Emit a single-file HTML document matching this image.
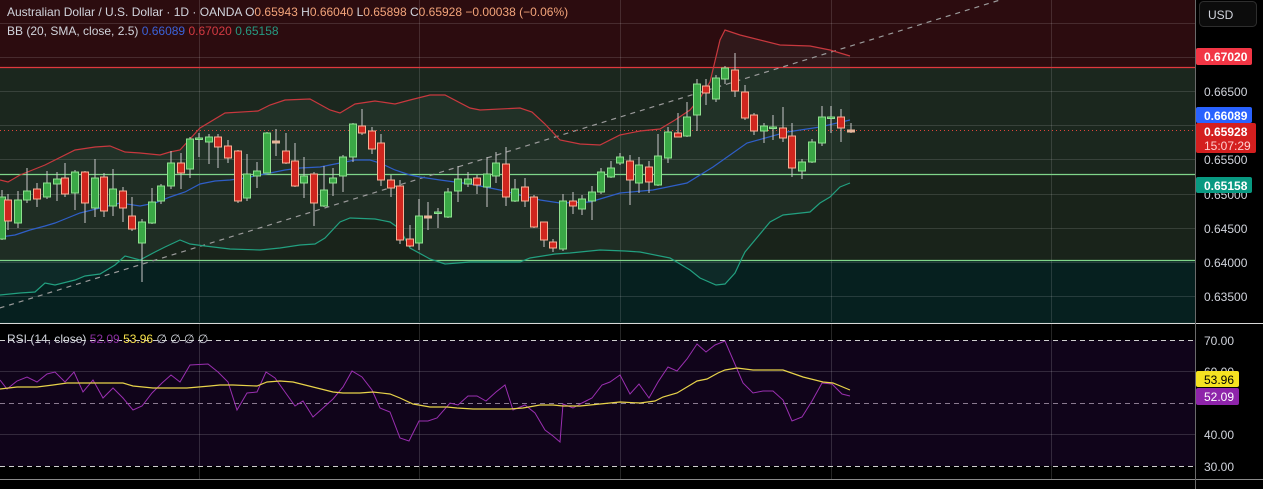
<!DOCTYPE html>
<html><head><meta charset="utf-8"><style>
html,body{margin:0;padding:0;background:#000;width:1263px;height:489px;overflow:hidden;font-family:"Liberation Sans",sans-serif}
svg{display:block}
text{font-family:"Liberation Sans",sans-serif;font-size:12px}
.g rect{fill:#3aa846;stroke:#8fe08f;stroke-width:1}
.r rect{fill:#d0261e;stroke:#f7b096;stroke-width:1}
.w line{stroke:#c8c8c8;stroke-width:1}
</style></head><body>
<svg width="1263" height="489" viewBox="0 0 1263 489" xmlns="http://www.w3.org/2000/svg">
<rect x="0" y="0" width="1195" height="67" fill="#2c0c0f"/>
<rect x="0" y="67" width="1195" height="107" fill="#1b271e"/>
<rect x="0" y="174" width="1195" height="86" fill="#19231a"/>
<rect x="0" y="260" width="1195" height="63" fill="#06201f"/>
<polygon fill="#5a8a80" fill-opacity="0.10" points="0,180 8,182 20,175 45,165 75,150 95,147 110,146 125,152 140,153 160,155 170,152 180,150 200,128 225,113 258,111 270,105 285,100 310,99 330,110 340,113 355,104 375,101 395,104 410,100 430,95 445,95 470,108 480,110 520,108 532,112 545,124 560,140 580,144 600,145 620,135 640,131 660,129 675,120 690,110 700,98 710,82 720,40 725,30 740,35 780,45 810,46 830,50 850,56 850,183 840,187 830,197 820,203 810,212 783,215 770,222 745,252 742,258 735,273 725,284 716,285 700,278 690,270 670,258 640,252 625,251 600,250 570,253 555,254 530,258 520,262 470,262 445,264 430,259 410,248 400,229 390,222 375,219 350,218 340,222 325,238 315,244 300,245 280,248 260,250 230,249 205,246 190,244 180,240 165,247 155,252 140,260 125,256 115,265 100,274 85,276 75,280 55,285 45,283 35,292 20,293 0,295"/>
<g stroke="#ffffff" stroke-opacity="0.13" stroke-width="1">
<line x1="0" y1="23.5" x2="1195" y2="23.5"/><line x1="0" y1="57.5" x2="1195" y2="57.5"/>
<line x1="0" y1="91.5" x2="1195" y2="91.5"/><line x1="0" y1="125.5" x2="1195" y2="125.5"/>
<line x1="0" y1="159.5" x2="1195" y2="159.5"/><line x1="0" y1="194.5" x2="1195" y2="194.5"/>
<line x1="0" y1="228.5" x2="1195" y2="228.5"/><line x1="0" y1="262.5" x2="1195" y2="262.5"/>
<line x1="0" y1="296.5" x2="1195" y2="296.5"/>
<line x1="199.5" y1="0" x2="199.5" y2="479"/><line x1="419.5" y1="0" x2="419.5" y2="479"/>
<line x1="620.5" y1="0" x2="620.5" y2="479"/><line x1="831.5" y1="0" x2="831.5" y2="479"/>
<line x1="1051.5" y1="0" x2="1051.5" y2="479"/>
</g>
<line x1="0" y1="67.5" x2="1195" y2="67.5" stroke="#e0393e" stroke-width="1.3"/>
<line x1="0" y1="174.5" x2="1195" y2="174.5" stroke="#7fd58a" stroke-width="1.3"/>
<line x1="0" y1="260.5" x2="1195" y2="260.5" stroke="#7fd58a" stroke-width="1.3"/>
<line x1="-10" y1="311" x2="1000" y2="0" stroke="#9a9a9a" stroke-width="1.2" stroke-dasharray="5,5"/>
<line x1="0" y1="130.5" x2="1195" y2="130.5" stroke="#e0453a" stroke-width="1" stroke-dasharray="1,3"/>
<polyline fill="none" stroke="#c8383e" stroke-width="1.2" points="0,180 8,182 20,175 45,165 75,150 95,147 110,146 125,152 140,153 160,155 170,152 180,150 200,128 225,113 258,111 270,105 285,100 310,99 330,110 340,113 355,104 375,101 395,104 410,100 430,95 445,95 470,108 480,110 520,108 532,112 545,124 560,140 580,144 600,145 620,135 640,131 660,129 675,120 690,110 700,98 710,82 720,40 725,30 740,35 780,45 810,46 830,50 850,56"/>
<polyline fill="none" stroke="#2f5fc8" stroke-width="1.2" points="0,237 15,235 30,230 45,226 55,223 65,219 80,213 100,208 120,203 140,206 155,203 170,197 185,192 200,184 215,181 230,180 245,178 265,174 285,170 300,168 320,167 340,163 355,160 370,160 380,163 395,170 410,175 420,177 440,180 470,184 500,190 540,200 560,203 590,202 620,193 653,190 687,183 713,167 747,143 787,132 820,127 850,120"/>
<polyline fill="none" stroke="#22a080" stroke-width="1.2" points="0,295 20,293 35,292 45,283 55,285 75,280 85,276 100,274 115,265 125,256 140,260 155,252 165,247 180,240 190,244 205,246 230,249 260,250 280,248 300,245 315,244 325,238 340,222 350,218 375,219 390,222 400,229 410,248 430,259 445,264 470,262 520,262 530,258 555,254 570,253 600,250 625,251 640,252 670,258 690,270 700,278 716,285 725,284 735,273 742,258 745,252 770,222 783,215 810,212 820,203 830,197 840,187 850,183"/>
<g class="w">
<line x1="2" y1="190" x2="2" y2="240"/><line x1="8" y1="194" x2="8" y2="230"/><line x1="18" y1="191" x2="18" y2="228"/><line x1="27" y1="168" x2="27" y2="203"/><line x1="37" y1="183" x2="37" y2="207"/><line x1="47" y1="171" x2="47" y2="199"/><line x1="57" y1="172" x2="57" y2="201"/><line x1="65" y1="163" x2="65" y2="197"/><line x1="75" y1="170" x2="75" y2="210"/><line x1="85" y1="171" x2="85" y2="223"/><line x1="95" y1="159" x2="95" y2="217"/><line x1="104" y1="173" x2="104" y2="217"/><line x1="113" y1="169" x2="113" y2="216"/><line x1="123" y1="187" x2="123" y2="222"/><line x1="132" y1="197" x2="132" y2="231"/><line x1="142" y1="219" x2="142" y2="282"/><line x1="152" y1="188" x2="152" y2="224"/><line x1="161" y1="184" x2="161" y2="204"/><line x1="171" y1="151" x2="171" y2="189"/><line x1="181" y1="153" x2="181" y2="189"/><line x1="190" y1="137" x2="190" y2="178"/><line x1="199" y1="133" x2="199" y2="157"/><line x1="209" y1="134" x2="209" y2="164"/><line x1="218" y1="134" x2="218" y2="168"/><line x1="228" y1="140" x2="228" y2="163"/><line x1="238" y1="150" x2="238" y2="203"/><line x1="247" y1="154" x2="247" y2="201"/><line x1="257" y1="162" x2="257" y2="188"/><line x1="267" y1="132" x2="267" y2="173"/><line x1="276" y1="129" x2="276" y2="156"/><line x1="286" y1="133" x2="286" y2="164"/><line x1="295" y1="143" x2="295" y2="187"/><line x1="304" y1="157" x2="304" y2="198"/><line x1="314" y1="172" x2="314" y2="226"/><line x1="324" y1="166" x2="324" y2="207"/><line x1="333" y1="168" x2="333" y2="196"/><line x1="343" y1="155" x2="343" y2="192"/><line x1="353" y1="123" x2="353" y2="162"/><line x1="362" y1="109" x2="362" y2="135"/><line x1="372" y1="127" x2="372" y2="154"/><line x1="381" y1="134" x2="381" y2="186"/><line x1="391" y1="175" x2="391" y2="197"/><line x1="400" y1="180" x2="400" y2="244"/><line x1="410" y1="225" x2="410" y2="247"/><line x1="419" y1="199" x2="419" y2="250"/><line x1="428" y1="202" x2="428" y2="230"/><line x1="438" y1="208" x2="438" y2="228"/><line x1="448" y1="188" x2="448" y2="218"/><line x1="458" y1="166" x2="458" y2="202"/><line x1="468" y1="172" x2="468" y2="187"/><line x1="477" y1="175" x2="477" y2="194"/><line x1="487" y1="157" x2="487" y2="207"/><line x1="496" y1="152" x2="496" y2="183"/><line x1="506" y1="147" x2="506" y2="206"/><line x1="515" y1="179" x2="515" y2="202"/><line x1="525" y1="178" x2="525" y2="207"/><line x1="534" y1="195" x2="534" y2="228"/><line x1="544" y1="222" x2="544" y2="247"/><line x1="553" y1="239" x2="553" y2="252"/><line x1="563" y1="194" x2="563" y2="251"/><line x1="573" y1="192" x2="573" y2="214"/><line x1="582" y1="195" x2="582" y2="215"/><line x1="592" y1="186" x2="592" y2="220"/><line x1="601" y1="168" x2="601" y2="194"/><line x1="611" y1="161" x2="611" y2="178"/><line x1="620" y1="153" x2="620" y2="165"/><line x1="630" y1="155" x2="630" y2="205"/><line x1="639" y1="157" x2="639" y2="193"/><line x1="649" y1="161" x2="649" y2="193"/><line x1="658" y1="134" x2="658" y2="186"/><line x1="668" y1="127" x2="668" y2="163"/><line x1="678" y1="113" x2="678" y2="137"/><line x1="687" y1="102" x2="687" y2="137"/><line x1="697" y1="79" x2="697" y2="131"/><line x1="706" y1="79" x2="706" y2="105"/><line x1="716" y1="75" x2="716" y2="102"/><line x1="725" y1="66" x2="725" y2="84"/><line x1="735" y1="53" x2="735" y2="97"/><line x1="745" y1="85" x2="745" y2="120"/><line x1="754" y1="113" x2="754" y2="135"/><line x1="764" y1="123" x2="764" y2="143"/><line x1="773" y1="115" x2="773" y2="140"/><line x1="783" y1="107" x2="783" y2="142"/><line x1="792" y1="123" x2="792" y2="177"/><line x1="802" y1="159" x2="802" y2="179"/><line x1="812" y1="139" x2="812" y2="163"/><line x1="822" y1="106" x2="822" y2="146"/><line x1="831" y1="106" x2="831" y2="133"/><line x1="841" y1="109" x2="841" y2="142"/><line x1="851" y1="123" x2="851" y2="133"/>
</g>
<g class="g">
<rect x="-1.5" y="197" width="7" height="42"/><rect x="14.5" y="200" width="7" height="23"/><rect x="23.5" y="191" width="7" height="9"/><rect x="43.5" y="183" width="7" height="14"/><rect x="53.5" y="179" width="7" height="5"/><rect x="71.5" y="172" width="7" height="21"/><rect x="91.5" y="178" width="7" height="30"/><rect x="109.5" y="189" width="7" height="17"/><rect x="138.5" y="222" width="7" height="21"/><rect x="148.5" y="202" width="7" height="21"/><rect x="157.5" y="186" width="7" height="15"/><rect x="167.5" y="163" width="7" height="23"/><rect x="186.5" y="139" width="7" height="30"/><rect x="195.5" y="138" width="7" height="1.5"/><rect x="205.5" y="137" width="7" height="5"/><rect x="243.5" y="174" width="7" height="24"/><rect x="253.5" y="171" width="7" height="5"/><rect x="263.5" y="133" width="7" height="40"/><rect x="300.5" y="176" width="7" height="7"/><rect x="320.5" y="190" width="7" height="16"/><rect x="329.5" y="178" width="7" height="5"/><rect x="339.5" y="157" width="7" height="19"/><rect x="349.5" y="124" width="7" height="33"/><rect x="415.5" y="216" width="7" height="27"/><rect x="434.5" y="212" width="7" height="1.5"/><rect x="444.5" y="192" width="7" height="25"/><rect x="454.5" y="179" width="7" height="12"/><rect x="464.5" y="179" width="7" height="5"/><rect x="483.5" y="174" width="7" height="13"/><rect x="492.5" y="163" width="7" height="13"/><rect x="511.5" y="189" width="7" height="12"/><rect x="559.5" y="201" width="7" height="48"/><rect x="578.5" y="199" width="7" height="10"/><rect x="588.5" y="192" width="7" height="9"/><rect x="597.5" y="172" width="7" height="20"/><rect x="607.5" y="168" width="7" height="9"/><rect x="616.5" y="157" width="7" height="6"/><rect x="635.5" y="165" width="7" height="18"/><rect x="654.5" y="156" width="7" height="29"/><rect x="664.5" y="132" width="7" height="26"/><rect x="683.5" y="117" width="7" height="19"/><rect x="693.5" y="84" width="7" height="31"/><rect x="712.5" y="78" width="7" height="21"/><rect x="721.5" y="68" width="7" height="11"/><rect x="760.5" y="126" width="7" height="5"/><rect x="769.5" y="127" width="7" height="1.5"/><rect x="798.5" y="162" width="7" height="9"/><rect x="808.5" y="142" width="7" height="20"/><rect x="818.5" y="117" width="7" height="26"/><rect x="827.5" y="117" width="7" height="1.5"/>
</g>
<g class="r">
<rect x="4.5" y="200" width="7" height="21"/><rect x="33.5" y="189" width="7" height="10"/><rect x="61.5" y="178" width="7" height="16"/><rect x="81.5" y="172" width="7" height="31"/><rect x="100.5" y="177" width="7" height="34"/><rect x="119.5" y="191" width="7" height="17"/><rect x="128.5" y="216" width="7" height="13"/><rect x="177.5" y="163" width="7" height="10"/><rect x="214.5" y="137" width="7" height="10"/><rect x="224.5" y="146" width="7" height="12"/><rect x="234.5" y="151" width="7" height="50"/><rect x="272.5" y="141" width="7" height="2" style="fill:#e8b59a;stroke:#e8b59a"/><rect x="282.5" y="151" width="7" height="12"/><rect x="291.5" y="161" width="7" height="25"/><rect x="310.5" y="174" width="7" height="29"/><rect x="358.5" y="126" width="7" height="7"/><rect x="368.5" y="131" width="7" height="18"/><rect x="377.5" y="143" width="7" height="37"/><rect x="387.5" y="180" width="7" height="8"/><rect x="396.5" y="186" width="7" height="54"/><rect x="406.5" y="239" width="7" height="7"/><rect x="424.5" y="216" width="7" height="2" style="fill:#e8b59a;stroke:#e8b59a"/><rect x="473.5" y="178" width="7" height="7"/><rect x="502.5" y="164" width="7" height="33"/><rect x="521.5" y="187" width="7" height="14"/><rect x="530.5" y="197" width="7" height="30"/><rect x="540.5" y="222" width="7" height="18"/><rect x="549.5" y="242" width="7" height="6"/><rect x="569.5" y="201" width="7" height="5"/><rect x="626.5" y="161" width="7" height="19"/><rect x="645.5" y="167" width="7" height="15"/><rect x="674.5" y="133" width="7" height="4"/><rect x="702.5" y="86" width="7" height="7"/><rect x="731.5" y="70" width="7" height="21"/><rect x="741.5" y="92" width="7" height="26"/><rect x="750.5" y="115" width="7" height="16"/><rect x="779.5" y="128" width="7" height="10"/><rect x="788.5" y="136" width="7" height="32"/><rect x="837.5" y="117" width="7" height="11"/><rect x="847.5" y="130" width="7" height="2" style="fill:#e8b59a;stroke:#e8b59a"/>
</g>
<text x="7" y="16" fill="#d1d4dc">Australian Dollar / U.S. Dollar · 1D · OANDA  <tspan fill="#d1d4dc">O</tspan><tspan fill="#f3a47a">0.65943</tspan>  <tspan fill="#d1d4dc">H</tspan><tspan fill="#f3a47a">0.66040</tspan>  <tspan fill="#d1d4dc">L</tspan><tspan fill="#f3a47a">0.65898</tspan>  <tspan fill="#d1d4dc">C</tspan><tspan fill="#f3a47a">0.65928</tspan>  <tspan fill="#f3a47a">−0.00038 (−0.06%)</tspan></text>
<text x="7" y="35" fill="#d1d4dc">BB (20, SMA, close, 2.5) <tspan fill="#3b62d8">0.66089</tspan> <tspan fill="#d23a42">0.67020</tspan> <tspan fill="#269a82">0.65158</tspan></text>
<rect x="0" y="322" width="1195" height="2" fill="#0c2a28"/>
<line x1="0" y1="323.5" x2="1263" y2="323.5" stroke="#d8d8d8" stroke-width="1"/>
<rect x="0" y="324" width="1195" height="155" fill="#000"/>
<rect x="0" y="340" width="1195" height="126" fill="#10041a"/>
<g stroke="#ffffff" stroke-opacity="0.15">
<line x1="0" y1="371.5" x2="1195" y2="371.5"/><line x1="0" y1="434.5" x2="1195" y2="434.5"/>
<line x1="199.5" y1="324" x2="199.5" y2="479"/><line x1="419.5" y1="324" x2="419.5" y2="479"/>
<line x1="620.5" y1="324" x2="620.5" y2="479"/><line x1="831.5" y1="324" x2="831.5" y2="479"/>
<line x1="1051.5" y1="324" x2="1051.5" y2="479"/>
</g>
<line x1="0" y1="340.5" x2="1195" y2="340.5" stroke="#cfcfcf" stroke-dasharray="5,4"/>
<line x1="0" y1="466.5" x2="1195" y2="466.5" stroke="#cfcfcf" stroke-dasharray="5,4"/>
<line x1="0" y1="403.5" x2="1195" y2="403.5" stroke="#8a7a90" stroke-dasharray="5,4"/>
<polyline fill="none" stroke="#9a2fb0" stroke-width="1" points="0,380 7,389 17,381 27,377 37,382 47,374 55,372 65,382 74,372 83,392 93,380 103,398 113,388 123,398 133,410 142,406 152,393 162,383 171,375 180,382 190,365 208,364 218,372 228,382 237,410 247,393 257,392 266,372 275,378 285,392 295,406 303,401 313,417 323,408 333,399 343,387 352,371 362,377 372,390 380,408 390,412 400,438 409,441 419,421 428,421 437,418 450,403 458,405 468,396 477,396 486,401 496,392 505,385 513,410 525,405 535,413 545,430 553,436 560,442 563,404 573,408 582,403 592,398 602,385 610,382 620,375 630,394 639,384 649,398 658,382 668,367 677,371 687,359 697,344 706,352 715,345 725,341 734,362 743,383 753,393 763,391 773,391 783,400 792,421 802,417 812,401 822,383 832,384 842,394 850,396"/>
<polyline fill="none" stroke="#e8d34a" stroke-width="1.2" points="0,389 17,387 37,387 53,385 67,383 87,383 123,383 133,386 153,388 187,388 210,386 220,385 233,385 257,386 267,382 280,381 293,382 313,387 333,392 343,393 360,393 373,392 390,394 400,398 413,404 430,407 447,407 457,408 473,409 493,409 510,409 523,408 540,405 553,405 563,406 580,406 600,404 620,402 640,403 655,401 663,397 677,393 687,387 697,381 707,379 718,373 725,370 737,368 753,370 783,370 803,377 823,382 833,383 850,390"/>
<text x="7" y="343" fill="#d1d4dc">RSI (14, close) <tspan fill="#8a2fa0">52.09</tspan> <tspan fill="#f5e04a">53.96</tspan> <tspan fill="#d1d4dc">∅ ∅ ∅ ∅</tspan></text>
<line x1="0" y1="479.5" x2="1263" y2="479.5" stroke="#8a8a8a"/>
<rect x="1196" y="0" width="67" height="489" fill="#000"/>
<line x1="1195.5" y1="0" x2="1195.5" y2="489" stroke="#6a6a6a"/>
<line x1="1196" y1="323.5" x2="1263" y2="323.5" stroke="#d8d8d8"/>
<line x1="1196" y1="479.5" x2="1263" y2="479.5" stroke="#8a8a8a"/>
<rect x="1199.5" y="1.5" width="57" height="25" rx="4" fill="#0c0c0c" stroke="#2e2e2e"/>
<text x="1208" y="19" fill="#d1d4dc">USD</text>
<g fill="#d1d4dc">
<text x="1204" y="96">0.66500</text><text x="1204" y="164">0.65500</text>
<text x="1204" y="199">0.65000</text><text x="1204" y="233">0.64500</text>
<text x="1204" y="267">0.64000</text><text x="1204" y="301">0.63500</text>
<text x="1204" y="345">70.00</text><text x="1204" y="376">60.00</text>
<text x="1204" y="439">40.00</text><text x="1204" y="471">30.00</text>
</g>
<rect x="1196" y="48" width="56" height="17" rx="2" fill="#f23645"/><text x="1204" y="61" fill="#fff" font-weight="bold">0.67020</text>
<rect x="1196" y="107" width="56" height="16" rx="2" fill="#2962ff"/><text x="1204" y="120" fill="#fff" font-weight="bold">0.66089</text>
<rect x="1196" y="123" width="60" height="30" rx="2" fill="#d41f1f"/><text x="1204" y="136" fill="#fff" font-weight="bold">0.65928</text><text x="1204" y="150" fill="#ffd0d0">15:07:29</text>
<rect x="1196" y="177" width="56" height="16" rx="2" fill="#089981"/><text x="1204" y="190" fill="#fff" font-weight="bold">0.65158</text>
<rect x="1196" y="371" width="43" height="16" rx="2" fill="#f5e221"/><text x="1204" y="384" fill="#000">53.96</text>
<rect x="1196" y="388" width="43" height="17" rx="2" fill="#8e24aa"/><text x="1204" y="401" fill="#fff">52.09</text>
</svg>
</body></html>
